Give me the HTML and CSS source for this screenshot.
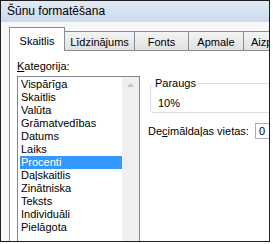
FILE: index.html
```html
<!DOCTYPE html>
<html lang="lv">
<head>
    <meta charset="UTF-8">
    <meta name="viewport" content="width=device-width, initial-scale=1.0">
    <title>Šūnu formatēšana</title>
    <link rel="stylesheet" href="styles.css">
</head>
<body>
    <div class="window">
        <div class="titlebar">Šūnu formatēšana</div>

        <div class="dialog">
            <div class="tabs">
                <div class="tab active tab-number">Skaitlis</div>
                <div class="tab tab-align">Līdzinājums</div>
                <div class="tab tab-font">Fonts</div>
                <div class="tab tab-border">Apmale</div>
                <div class="tab tab-fill">Aizpildījums</div>
            </div>

            <div class="panel">
                <div class="category">
                    <label class="caption"><u>K</u>ategorija:</label>
                    <div class="listbox">
                        <ul class="items">
                            <li>Vispārīga</li>
                            <li>Skaitlis</li>
                            <li>Valūta</li>
                            <li>Grāmatvedības</li>
                            <li>Datums</li>
                            <li>Laiks</li>
                            <li class="selected">Procenti</li>
                            <li>Daļskaitlis</li>
                            <li>Zinātniska</li>
                            <li>Teksts</li>
                            <li>Individuāli</li>
                            <li>Pielāgota</li>
                        </ul>
                        <div class="scrollbar">
                            <svg class="arrow" width="7" height="4" viewBox="0 0 7 4">
                                <path d="M0 4 L3.5 0 L7 4 Z" fill="#c4c4c4"/>
                            </svg>
                        </div>
                    </div>
                </div>

                <div class="settings">
                    <fieldset class="sample">
                        <legend>Paraugs</legend>
                        <div class="sample-value">10%</div>
                    </fieldset>

                    <div class="decimals">
                        <label>De<u>c</u>imāldaļas vietas:</label>
                        <input type="text" value="0">
                    </div>
                </div>
            </div>
        </div>
    </div>
</body>
</html>
```

FILE: styles.css
```css
* {
    box-sizing: border-box;
}

body {
    margin: 0;
    background-color: #fff;
    font-family: "Liberation Sans", Arial, sans-serif;
    font-size: 11px;
    color: #000;
}

.window {
    width: 270px;
    height: 242px;
    border: 1px solid #1f1f1f;
    overflow: hidden;
    background-color: #f7f7f7;
}

.titlebar {
    height: 21px;
    padding-left: 6px;
    font-size: 12px;
    line-height: 21px;
    background: linear-gradient(#e0eaf6, #cbdaec);
}

.dialog {
    width: 420px;
}

/* tab strip */
.tabs {
    display: flex;
    align-items: flex-end;
    height: 28px;
    padding-left: 8px;
}

.tab {
    height: 19px;
    padding-top: 2px;
    line-height: 16px;
    text-align: center;
    white-space: nowrap;
    border-top: 1px solid #898c95;
    border-right: 1px solid #898c95;
    background: linear-gradient(#f4f4f4, #e1e1e1);
}

.tab.active {
    position: relative;
    z-index: 1;
    height: 24px;
    padding-top: 5px;
    margin-bottom: -1px;
    border-left: 1px solid #898c95;
    background: #fff;
}

.tab-number { width: 56px; }
.tab-align { width: 70px; }
.tab-font { width: 54px; }
.tab-border { width: 55px; }
.tab-fill { width: 90px; text-align: left; padding-left: 7px; }

/* page */
.panel {
    display: flex;
    height: 200px;
    margin-left: 8px;
    padding: 9px 0 0 7px;
    border-top: 1px solid #898c95;
    border-left: 1px solid #898c95;
    background-color: #fff;
}

.category {
    width: 123px;
}

.caption {
    display: block;
    line-height: 13px;
    margin-bottom: 3px;
}

.listbox {
    display: flex;
    height: 180px;
    border: 1px solid #828790;
}

.items {
    list-style: none;
    width: 102px;
    margin: 0 0 0 2px;
    padding: 1px 0 0 0;
}

.items li {
    line-height: 13px;
    padding-left: 1px;
}

.items li.selected {
    background-color: #3399ff;
    color: #fff;
}

.scrollbar {
    width: 17px;
    margin-left: auto;
    background-color: #efefef;
}

.arrow {
    display: block;
    margin: 6px auto 0;
}

.settings {
    width: 220px;
    margin-left: 8px;
}

.sample {
    margin: 17px 0 0 2px;
    padding: 0 0 2px 0;
    border: 1px solid #d5dfe5;
    border-radius: 3px;
}

.sample legend {
    margin-left: 2px;
    padding: 0 2px;
    line-height: 13px;
}

.sample-value {
    padding: 7px 0 0 7px;
    line-height: 13px;
}

.decimals {
    display: flex;
    align-items: center;
    margin-top: 10px;
}

.decimals label {
    width: 107px;
    line-height: 13px;
    white-space: nowrap;
}

.decimals input {
    width: 40px;
    height: 16px;
    padding: 0 0 0 3px;
    border: 1px solid #abadb3;
    font: inherit;
    line-height: 13px;
}
```
